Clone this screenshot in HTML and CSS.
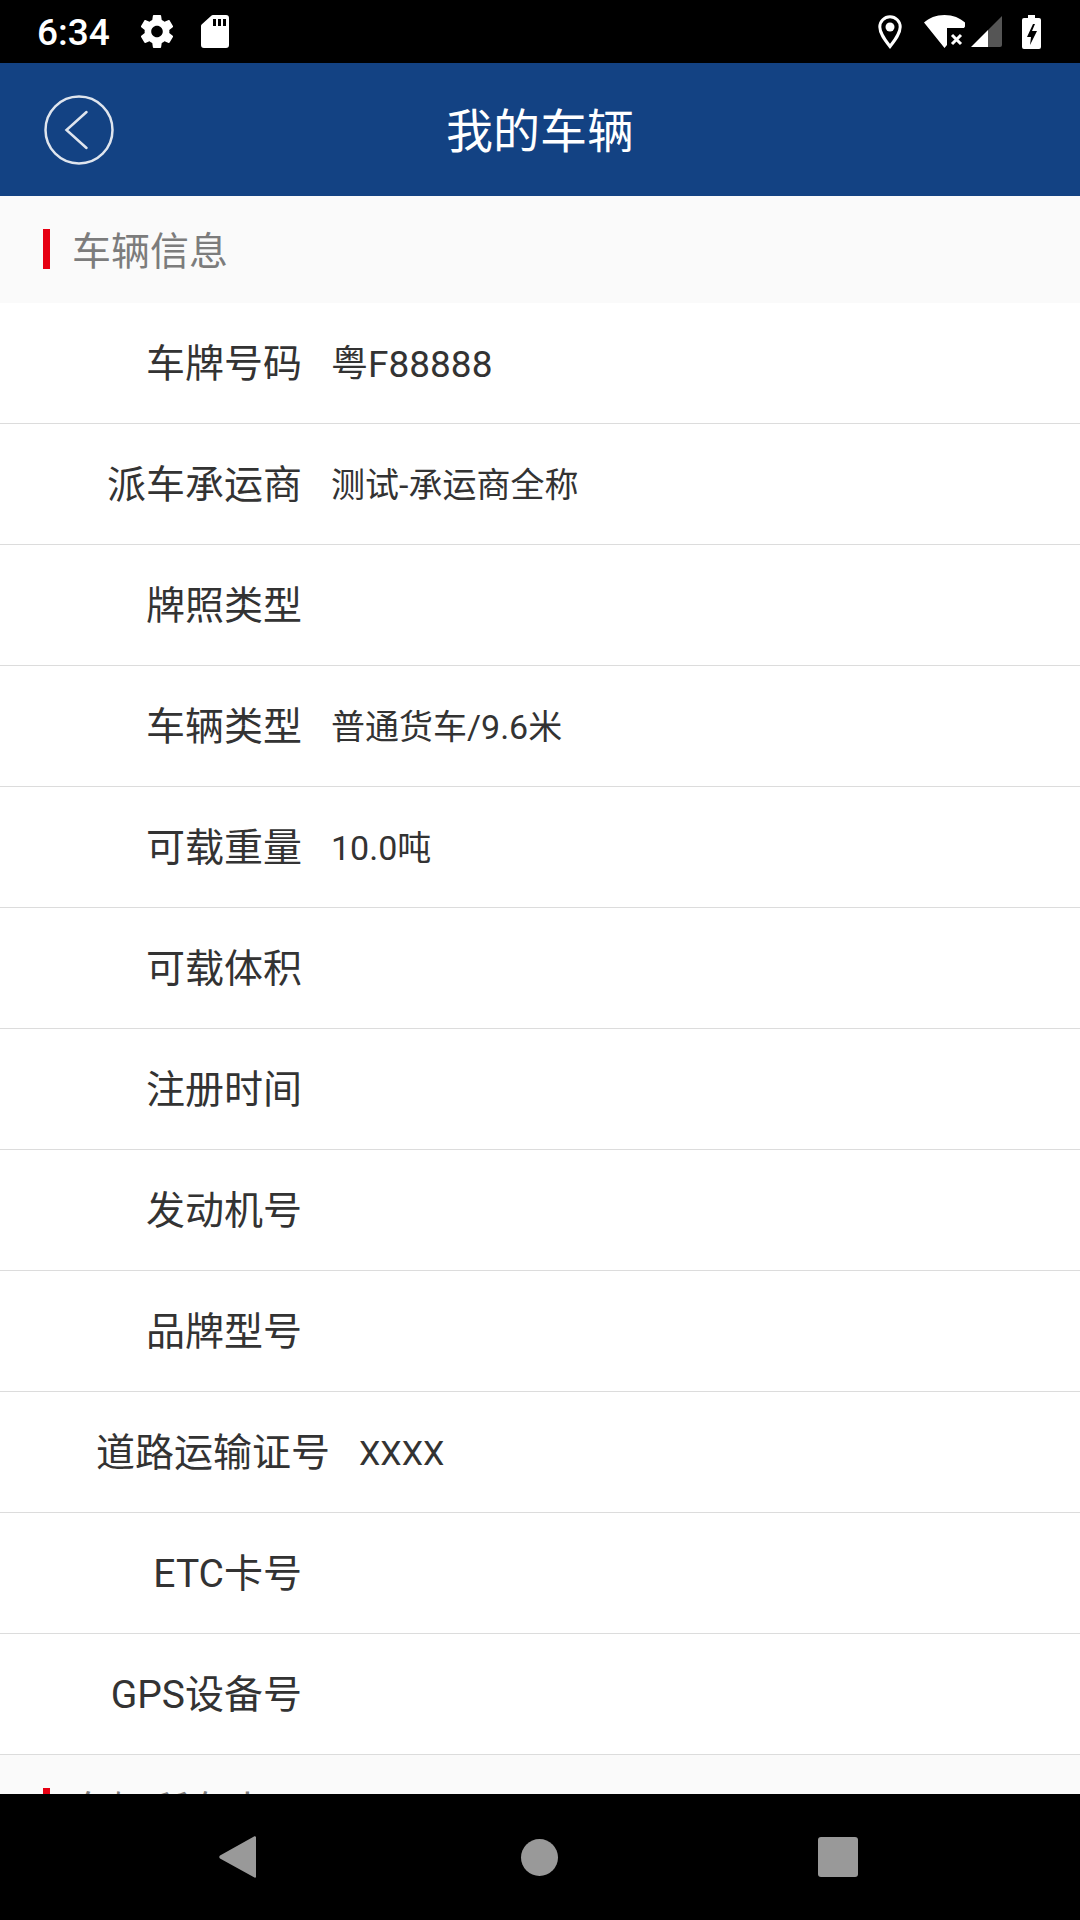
FILE: index.html
```html
<!DOCTYPE html>
<html lang="zh-CN">
<head>
  <meta charset="UTF-8">
  <meta name="viewport" content="width=device-width, initial-scale=1.0">
  <title>我的车辆</title>
  <link rel="stylesheet" href="styles.css">
</head>
<body>
  <div class="screen">
    <div class="status-bar">
      <div class="status-left">
        <span class="time">6:34</span>
        <svg class="icon-gear" viewBox="2.5 2 19 20"><path fill="#fff" d="M19.43 12.98c.04-.32.07-.64.07-.98s-.03-.66-.07-.98l2.11-1.65c.19-.15.24-.42.12-.64l-2-3.46c-.12-.22-.39-.3-.61-.22l-2.49 1c-.52-.4-1.08-.73-1.69-.98l-.38-2.65C14.46 2.18 14.25 2 14 2h-4c-.25 0-.46.18-.49.42l-.38 2.65c-.61.25-1.17.59-1.69.98l-2.49-1c-.23-.09-.49 0-.61.22l-2 3.46c-.13.22-.07.49.12.64l2.11 1.65c-.04.32-.07.65-.07.98s.03.66.07.98l-2.11 1.65c-.19.15-.24.42-.12.64l2 3.46c.12.22.39.3.61.22l2.49-1c.52.4 1.08.73 1.69.98l.38 2.65c.03.24.24.42.49.42h4c.25 0 .46-.18.49-.42l.38-2.65c.61-.25 1.17-.59 1.69-.98l2.49 1c.23.09.49 0 .61-.22l2-3.46c.12-.22.07-.49-.12-.64l-2.11-1.65zM12 15.5c-1.93 0-3.5-1.57-3.5-3.5s1.57-3.5 3.5-3.5 3.5 1.57 3.5 3.5-1.57 3.5-3.5 3.5z"/></svg>
        <svg class="icon-sd" viewBox="0 0 28 33"><path fill="#fff" fill-rule="evenodd" d="M13 0h12a3 3 0 0 1 3 3v27a3 3 0 0 1-3 3H3a3 3 0 0 1-3-3V11a2 2 0 0 1 .6-1.4L10 .9A4 4 0 0 1 13 0zM12 4v7h3V4zM17 4v7h3V4zM22 4v7h3V4z"/></svg>
      </div>
      <div class="status-right">
        <svg class="icon-pin" viewBox="0 0 24 34"><path fill="none" stroke="#fff" stroke-width="3" d="M12 31.5C7 25 1.8 18.5 1.8 12a10.2 10.2 0 0 1 20.4 0c0 6.500-5.200 13-10.200 19.500z"/><circle cx="12" cy="12" r="4.500" fill="#fff"/></svg>
        <svg class="icon-wifi" viewBox="0 0 41 33"><path fill="#fff" d="M20.500 0C12 0 5 3 0 7.500L20.500 33l2.500-3V13h17l1-1.500 0-4C36 3 29 0 20.500 0z"/><path fill="none" stroke="#fff" stroke-width="3" d="M28 20l9 9M37 20l-9 9"/></svg>
        <svg class="icon-signal" viewBox="0 0 31 31"><path fill="#555" d="M31 0v29a2 2 0 0 1-2 2H17V14z"/><path fill="#fff" d="M17 14v17H0z"/></svg>
        <svg class="icon-battery" viewBox="0 0 19 34"><path fill="#fff" fill-rule="evenodd" d="M6 0h7v3h4a2 2 0 0 1 2 2v27a2 2 0 0 1-2 2H2a2 2 0 0 1-2-2V5a2 2 0 0 1 2-2h4zM11 9l-6 13h4l-1 8 7-14h-5l3-7z"/></svg>
      </div>
    </div>

    <div class="title-bar">
      <svg class="back" viewBox="0 0 70 70"><circle cx="35" cy="35" r="33.500" fill="none" stroke="#dfe5ee" stroke-width="2.500"/><path fill="none" stroke="#dfe5ee" stroke-width="2.500" stroke-linecap="round" d="M42.500 17L22.500 35 42.500 53"/></svg>
      <h1 class="title">我的车辆</h1>
    </div>

    <div class="content">
      <div class="section-head"><span class="mark"></span><span class="section-name">车辆信息</span></div>
      <div class="row"><span class="label">车牌号码</span><span class="value plate">粤F88888</span></div>
      <div class="row"><span class="label">派车承运商</span><span class="value">测试-承运商全称</span></div>
      <div class="row"><span class="label">牌照类型</span></div>
      <div class="row"><span class="label">车辆类型</span><span class="value">普通货车/9.6米</span></div>
      <div class="row"><span class="label">可载重量</span><span class="value">10.0吨</span></div>
      <div class="row"><span class="label">可载体积</span></div>
      <div class="row"><span class="label">注册时间</span></div>
      <div class="row"><span class="label">发动机号</span></div>
      <div class="row"><span class="label">品牌型号</span></div>
      <div class="row"><span class="label">道路运输证号</span><span class="value">XXXX</span></div>
      <div class="row"><span class="label">ETC卡号</span></div>
      <div class="row"><span class="label">GPS设备号</span></div>
      <div class="section-head"><span class="mark"></span><span class="section-name">车辆所有人</span></div>
    </div>

    <div class="nav-bar">
      <svg class="nav-back" viewBox="0 0 37 42"><path fill="#999" d="M35 0.500c1 -.8 2 0 2 1V40.500c0 1-1 1.800-2 .8L1 22.500c-1-1-1-2 0-3z"/></svg>
      <span class="nav-home"></span>
      <span class="nav-recent"></span>
    </div>
  </div>
</body>
</html>
```

FILE: styles.css
```css
* {
  box-sizing: border-box;
}
body {
  margin: 0;
  background-color: #fff;
  font-family: Roboto, 'Noto Sans CJK SC', sans-serif;
}
.screen {
  display: flex;
  flex-direction: column;
  width: 1080px;
  height: 1920px;
  overflow: hidden;
}
.status-bar {
  display: flex;
  justify-content: space-between;
  align-items: center;
  flex: none;
  height: 63px;
  padding: 0 39px 0 37px;
  background-color: #000;
  color: #fff;
}
.status-left, .status-right {
  display: flex;
  align-items: center;
}
.time {
  width: 73px;
  margin-right: 31px;
  padding-top: 3px;
  font-size: 37px;
  font-weight: 500;
  line-height: 60px;
}
.icon-gear {
  width: 32px;
  height: 33px;
  margin-right: 28px;
}
.icon-sd {
  width: 28px;
  height: 33px;
}
.icon-pin {
  width: 24px;
  height: 34px;
  margin-right: 22px;
}
.icon-wifi {
  width: 41px;
  height: 33px;
  margin-right: 6px;
}
.icon-signal {
  width: 31px;
  height: 31px;
  margin-right: 20px;
}
.icon-battery {
  width: 19px;
  height: 34px;
}
.title-bar {
  display: flex;
  justify-content: center;
  align-items: center;
  position: relative;
  flex: none;
  height: 133px;
  padding-bottom: 4px;
  background-color: #134283;
}
.back {
  position: absolute;
  left: 44px;
  top: 32px;
  width: 70px;
  height: 70px;
}
.title {
  margin: 0;
  color: #fff;
  font-size: 47px;
  font-weight: 400;
}
.content {
  flex: 1;
  min-height: 0;
  overflow: hidden;
}
.section-head {
  display: flex;
  align-items: center;
  height: 107px;
  padding-left: 43px;
  padding-bottom: 2px;
  background-color: #fafafa;
  color: #7c7c7c;
  font-size: 39px;
}
.mark {
  width: 7px;
  height: 40px;
  margin-right: 22px;
  background-color: #e60012;
}
.section-name {
  margin-bottom: 2px;
}
.row {
  display: flex;
  align-items: center;
  height: 121px;
  padding-top: 2px;
  padding-left: 96px;
  border-bottom: 1px solid #dcdcdc;
  color: #333;
  line-height: 1;
}
.label {
  min-width: 206px;
  margin-right: 29px;
  font-size: 39px;
  text-align: right;
}
.value {
  font-size: 34px;
}
.value.plate {
  font-size: 37px;
}
.nav-bar {
  display: flex;
  align-items: center;
  flex: none;
  height: 126px;
  padding-left: 219px;
  background-color: #000;
}
.nav-back {
  width: 37px;
  height: 42px;
  margin-right: 265px;
}
.nav-home {
  width: 37px;
  height: 37px;
  margin-right: 260px;
  border-radius: 50%;
  background-color: #999;
}
.nav-recent {
  width: 40px;
  height: 40px;
  border-radius: 3px;
  background-color: #999;
}
```
